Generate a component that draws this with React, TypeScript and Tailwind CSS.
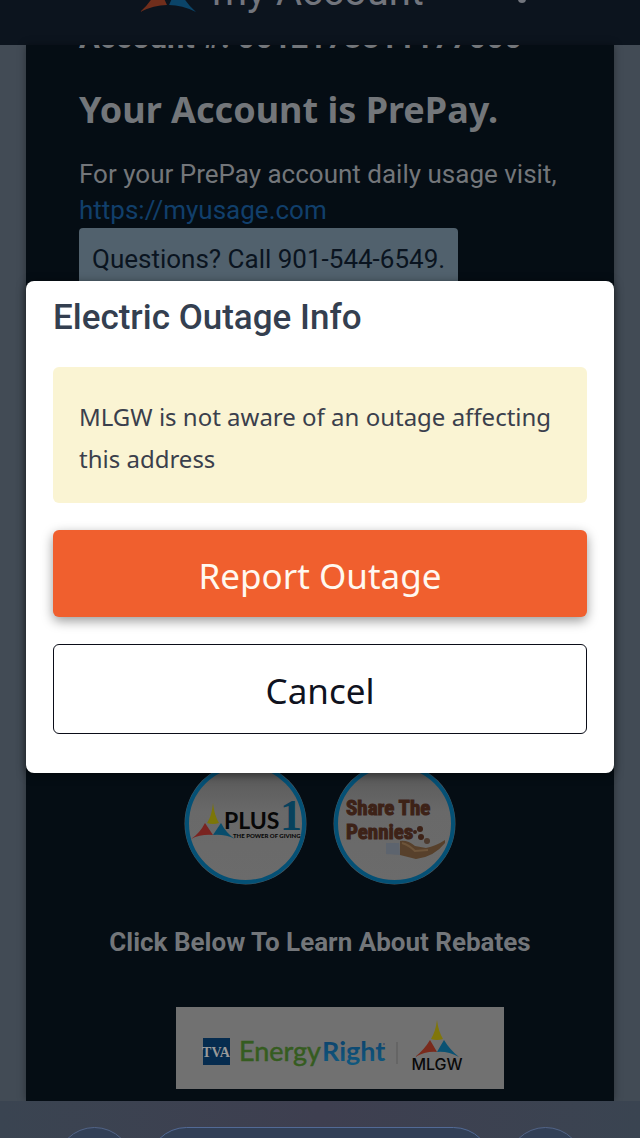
import React from 'react';

function HeaderMark() {
  return (
    <svg viewBox="0 0 56 54" className="h-[54px] w-14" aria-hidden="true">
      <path d="M28 0 C29 11 32 20 36 27 Q28 30 20 27 C24 20 27 11 28 0Z" fill="#7c7608" />
      <path d="M18 28 Q22 36 27 47 Q14 47 0 54 Q12 44 18 28Z" fill="#702e1c" />
      <path d="M38 28 Q34 36 29 47 Q42 47 56 54 Q44 44 38 28Z" fill="#0b4468" />
    </svg>
  );
}

function PlusOneBadge() {
  return (
    <a href="#plus1" aria-label="Plus 1" className="block">
      <svg viewBox="0 0 123 123" className="block size-[123px]">
        <defs>
          <linearGradient id="disc1" x1="0" y1="0" x2="0" y2="1">
            <stop offset="0" stopColor="#565656" />
            <stop offset="0.4" stopColor="#696969" />
            <stop offset="1" stopColor="#6b6b6b" />
          </linearGradient>
        </defs>
        <circle cx="61.5" cy="61.5" r="61" fill="#4a5a63" />
        <circle cx="61.5" cy="61.5" r="58.5" fill="url(#disc1)" stroke="#045075" strokeWidth="4" />
        <path d="M29 41 C30 50 32 56 35 61 Q29 63 23 61 C27 55 28 49 29 41Z" fill="#7c7608" />
        <path d="M21 61 Q25 67 29 73 Q17 72 7 77 Q16 71 21 61Z" fill="#7a2420" />
        <path d="M37 61 Q33 67 29 73 Q41 72 51 77 Q42 71 37 61Z" fill="#084d6c" />
        <text x="40" y="67" fontFamily="Lato, sans-serif" fontSize="23" fontWeight="700" fill="#070707">PLUS</text>
        <text x="96" y="68" fontFamily="'Liberation Serif', serif" fontSize="44" fontWeight="700" fill="#08425d">1</text>
        <text x="49" y="76" fontFamily="Lato, sans-serif" fontSize="6" fontWeight="900" fill="#070707">THE POWER OF GIVING</text>
      </svg>
    </a>
  );
}

function PenniesBadge() {
  return (
    <a href="#pennies" aria-label="Share The Pennies" className="block">
      <svg viewBox="0 0 123 123" className="block size-[123px]">
        <defs>
          <linearGradient id="disc2" x1="0" y1="0" x2="0" y2="1">
            <stop offset="0" stopColor="#565656" />
            <stop offset="0.4" stopColor="#696969" />
            <stop offset="1" stopColor="#6b6b6b" />
          </linearGradient>
        </defs>
        <circle cx="61.5" cy="61.5" r="61" fill="#4a5a63" />
        <circle cx="61.5" cy="61.5" r="58.5" fill="url(#disc2)" stroke="#045075" strokeWidth="4" />
        <g fontFamily="'Liberation Sans Narrow', 'Roboto Condensed', 'Open Sans Condensed', Roboto, sans-serif" fontSize="21" fontWeight="700" fill="#3d2217" stroke="#3d2217">
          <text x="13" y="53">Share The</text>
          <text x="13" y="77">Pennies</text>
        </g>
        <path d="M53 81 L66 81 L67 93 L53 92Z" fill="#5d646e" />
        <path d="M67 79 Q75 78 82 84 L93 86 Q103 84 112 78 L112 81 Q101 95 83 97 L67 93Z" fill="#57402b" />
        <path d="M69 81 Q76 83 82 89 L95 88" fill="none" stroke="#6d543a" strokeWidth="2" />
        <g fill="#3d2217">
          <circle cx="82" cy="70" r="2" />
          <circle cx="87" cy="67" r="3" />
          <circle cx="88" cy="75" r="3" />
          <circle cx="94" cy="79" r="3" fill="#4c3a2e" />
        </g>
      </svg>
    </a>
  );
}

function RebateBanner() {
  return (
    <a href="#rebates" aria-label="TVA EnergyRight and MLGW rebates" className="block">
      <svg viewBox="0 0 328 82" className="block h-[82px] w-[328px] bg-[#717171]">
        <defs>
          <linearGradient id="right" x1="0" y1="0" x2="0" y2="1">
            <stop offset="0" stopColor="#0b3f69" />
            <stop offset="1" stopColor="#105a80" />
          </linearGradient>
        </defs>
        <rect x="27" y="31" width="27" height="27" fill="#062c4f" />
        <text x="40" y="50" textAnchor="middle" fontFamily="'Liberation Serif', serif" fontSize="14" fontWeight="700" fill="#9a9a9a">TVA</text>
        <text x="63" y="54" fontFamily="Lato, sans-serif" fontSize="27" fill="#355c20" stroke="#355c20" strokeWidth="0.5">Energy</text>
        <text x="146" y="54" fontFamily="Lato, sans-serif" fontSize="27" fontWeight="700" fill="url(#right)">Right</text>
        <circle cx="208" cy="37" r="1" fill="#45516b" />
        <path d="M221 35V57" stroke="#5b5b5b" />
        <path d="M261 13 C262 21 264 27 267 32 Q261 34 255 32 C258 27 260 21 261 13Z" fill="#80760a" />
        <path d="M254 33 Q257 38 261 45 Q250 44 239 50 Q248 43 254 33Z" fill="#7a2a1c" />
        <path d="M268 33 Q265 38 261 45 Q272 44 283 50 Q274 43 268 33Z" fill="#0a5273" />
        <text x="261" y="63" textAnchor="middle" fontFamily="Inter, sans-serif" fontSize="16" fontWeight="500" fill="#090909">MLGW</text>
      </svg>
    </a>
  );
}

export default function App() {
  return (
    <div className="relative flex h-screen flex-col overflow-hidden bg-[#424b55] font-['Roboto','Liberation_Sans',sans-serif]">
      <header className="flex h-[45px] shrink-0 items-end justify-between overflow-hidden bg-[#0c141e] pr-[114px] pb-[33px] pl-[140px]">
        <div className="flex items-end gap-4">
          <HeaderMark />
          <span className="text-[40px] leading-10 text-[#72757d]">my Account</span>
        </div>
        <span className="mb-[9px] size-2 rounded-full bg-[#72757d]" />
      </header>

      <main className="mx-[26px] flex min-h-0 flex-1 flex-col overflow-hidden bg-[#050d14] text-[#73767a] shadow-[0_0_8px_rgba(0,0,0,0.35)]">
        <div className="px-[53px]">
          <p className="-mt-[23px] text-[31px] leading-8 font-bold whitespace-nowrap">Account #: 0012173811177000</p>
          <h2 className="mt-[30px] font-['Noto_Sans',sans-serif] text-4xl leading-[52px] font-bold">Your Account is PrePay.</h2>
          <p className="mt-5 text-[26px] leading-9">
            For your PrePay account daily usage visit,
            <br />
            <a href="https://myusage.com" className="text-[#113f6b]">https://myusage.com</a>
          </p>
          <div className="inline-block h-[60px] rounded-sm bg-[#51616d] px-[13px] pt-[13px] text-[26px] leading-9 text-[#0a1420]">
            Questions? Call 901-544-6549.
          </div>
        </div>
        <div className="mt-auto flex flex-col items-center pb-3">
          <div className="flex gap-[26px]">
            <PlusOneBadge />
            <PenniesBadge />
          </div>
          <h3 className="mt-[37px] text-[26px] leading-10 font-bold">Click Below To Learn About Rebates</h3>
          <div className="mt-[45px] ml-10">
            <RebateBanner />
          </div>
        </div>
      </main>

      <footer className="flex h-[37px] shrink-0 gap-[15px] overflow-hidden bg-linear-to-r from-[#3a4451] via-[#3e3f50] to-[#3a4451] px-14 pt-[26px]">
        <div className="size-[77px] shrink-0 rounded-full border border-[#526487] bg-[#324057]" />
        <div className="h-[77px] flex-1 rounded-full border border-[#526a96] bg-[#324057]" />
        <div className="size-[77px] shrink-0 rounded-full border border-[#526487] bg-[#324057]" />
      </footer>

      <div className="absolute inset-0 flex items-center px-[26px] pb-[84px]">
        <div role="dialog" aria-modal="true" aria-labelledby="outage-title" className="w-full rounded-lg bg-white px-[27px] pt-[13px] pb-[39px] shadow-[0_2px_10px_rgba(0,0,0,0.5)]">
          <h1 id="outage-title" className="text-[35px] leading-12 font-medium text-[#343f50]">Electric Outage Info</h1>
          <div className="mt-[25px] rounded-md bg-[#faf4d3] px-[26px] pt-[29px] pb-[23px] font-['Noto_Sans',sans-serif] text-2xl leading-[42px] text-[#3a3f4c]">
            MLGW is not aware of an outage affecting this address
          </div>
          <button className="mt-[27px] block h-[87px] w-full rounded-md bg-[#f05f2e] pt-[5px] font-['Noto_Sans',sans-serif] text-[35px] text-[#fff8f0] shadow-[0_4px_12px_rgba(0,0,0,0.4)]">
            Report Outage
          </button>
          <button className="mt-[27px] block h-[90px] w-full rounded-md border border-[#0b0d18] bg-white pt-[5px] font-['Noto_Sans',sans-serif] text-[35px] text-[#0f1220]">
            Cancel
          </button>
        </div>
      </div>
    </div>
  );
}
